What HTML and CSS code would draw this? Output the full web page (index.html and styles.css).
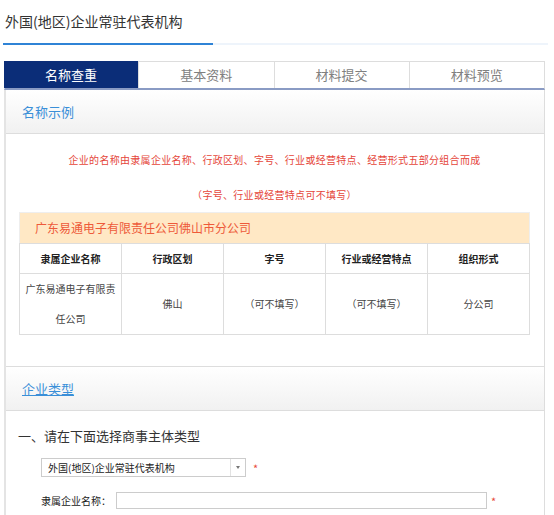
FILE: index.html
```html
<!DOCTYPE html>
<html>
<head>
	<meta charset="utf-8">
	<title>外国(地区)企业常驻代表机构</title>
	<meta name="viewport" content="width=device-width, initial-scale=1"><link rel="stylesheet" href="styles.css">
</head>
<body>
	<div class="title-bar">
		<h1 class="page-title">外国(地区)企业常驻代表机构</h1>
	</div>
	<div class="tabs">
		<span class="tab active">名称查重</span>
		<span class="tab">基本资料</span>
		<span class="tab">材料提交</span>
		<span class="tab">材料预览</span>
	</div>
	<div class="panel">
		<div class="section-head"><span>名称示例</span></div>
		<div class="section-body sample">
			<p class="tip">企业的名称由隶属企业名称、行政区划、字号、行业或经营特点、经营形式五部分组合而成</p>
			<p class="tip">（字号、行业或经营特点可不填写）</p>
			<div class="sample-box">
				<div class="sample-name">广东易通电子有限责任公司佛山市分公司</div>
				<table class="sample-table">
					<tr>
						<th>隶属企业名称</th>
						<th>行政区划</th>
						<th>字号</th>
						<th>行业或经营特点</th>
						<th>组织形式</th>
					</tr>
					<tr>
						<td>广东易通电子有限责任公司</td>
						<td>佛山</td>
						<td>（可不填写）</td>
						<td>（可不填写）</td>
						<td>分公司</td>
					</tr>
				</table>
			</div>
		</div>
		<div class="section-head top-line"><a href="#">企业类型</a></div>
		<div class="section-body form">
			<h2 class="step">一、请在下面选择商事主体类型</h2>
			<div class="field">
				<div class="select">
					<span>外国(地区)企业常驻代表机构</span>
					<i class="arrow"></i>
				</div>
				<em class="req">*</em>
			</div>
			<div class="field">
				<label class="label">隶属企业名称：</label>
				<input class="text-input" type="text">
				<em class="req">*</em>
			</div>
		</div>
	</div>
</body>
</html>
```

FILE: styles.css
```css
body{
	margin: 0;
	font-family: "Microsoft YaHei", "Noto Sans CJK SC", sans-serif;
	color: #333;
	background: #fff;
}
.title-bar{
	margin: 0 6px 0 3px;
	height: 43px;
	border-bottom: 2px solid #eef4fb;
}
.page-title{
	display: inline-block;
	width: 208px;
	margin: 0;
	padding-left: 2px;
	height: 43px;
	line-height: 43px;
	font-size: 14px;
	font-weight: normal;
	color: #333;
	border-bottom: 2px solid #2f83d6;
}
.tabs{
	display: flex;
	margin: 16px 9px 0 4px;
	border: 1px solid #ddd;
	border-bottom: 2px solid #8a9bc4;
	height: 26px;
}
.tab{
	flex: 1;
	text-align: center;
	line-height: 26px;
	font-size: 13px;
	color: #808080;
	border-left: 1px solid #ddd;
}
.tab:first-child{
	border-left: none;
}
.tab.active{
	background-color: #0b2d78;
	color: #fff;
	margin: -1px 0 0 -1px;
	padding-top: 1px;
}
.panel{
	margin: 0 9px 0 4px;
	border-left: 2px solid #e4e4e4;
	border-right: 1px solid #ddd;
}
.section-head{
	height: 43px;
	line-height: 43px;
	padding-left: 16px;
	font-size: 13px;
	color: #3a8fd8;
	background: linear-gradient(#fff, #f1f1f1);
	border-bottom: 1px solid #ddd;
}
.section-head.top-line{
	border-top: 1px solid #ddd;
}
.section-head a{
	color: #3a8fd8;
	text-decoration: underline;
}
.sample{
	padding: 8px 14px 31px 13px;
}
.tip{
	margin: 0;
	line-height: 35px;
	text-align: center;
	font-size: 10px;
	letter-spacing: 0.3px;
	color: #e5463a;
}
.sample-name{
	height: 30px;
	line-height: 30px;
	padding-left: 15px;
	font-size: 12px;
	color: #ee5a3a;
	background-color: #ffe8c5;
	border: 1px solid #eee;
	border-bottom: none;
}
.sample-table{
	width: 100%;
	border-collapse: collapse;
	table-layout: fixed;
}
.sample-table th, .sample-table td{
	border: 1px solid #ddd;
	text-align: center;
	font-size: 10px;
	padding: 0 4px;
}
.sample-table th{
	height: 29px;
	color: #222;
}
.sample-table td{
	height: 59px;
	line-height: 30px;
	color: #444;
}
.form{
	padding: 15px 0 6px 12px;
}
.step{
	margin: 0;
	font-size: 13px;
	font-weight: normal;
	line-height: 20px;
	color: #333;
}
.field{
	display: flex;
	align-items: center;
	margin: 12px 0 0 23px;
	height: 19px;
}
.field + .field{
	margin-top: 14px;
}
.select{
	display: flex;
	align-items: center;
	width: 203px;
	height: 17px;
	border: 1px solid #ccc;
	font-size: 10px;
	color: #222;
}
.select span{
	flex: 1;
	padding-left: 6px;
}
.arrow{
	width: 14px;
	height: 17px;
	border-left: 1px solid #e2e2e2;
	position: relative;
}
.arrow:after{
	content: "";
	position: absolute;
	left: 5px;
	top: 7px;
	border: 2px solid transparent;
	border-top: 3px solid #777;
}
.req{
	font-style: normal;
	color: #e84b3c;
	font-size: 11px;
	margin-left: 7px;
}
.label{
	width: 75px;
	font-size: 10px;
	color: #222;
}
.text-input{
	width: 365px;
	height: 15px;
	margin: 0;
	padding: 0 2px;
	border: 1px solid #ccc;
}
.field + .field .req{
	margin-left: 4px;
}
```
